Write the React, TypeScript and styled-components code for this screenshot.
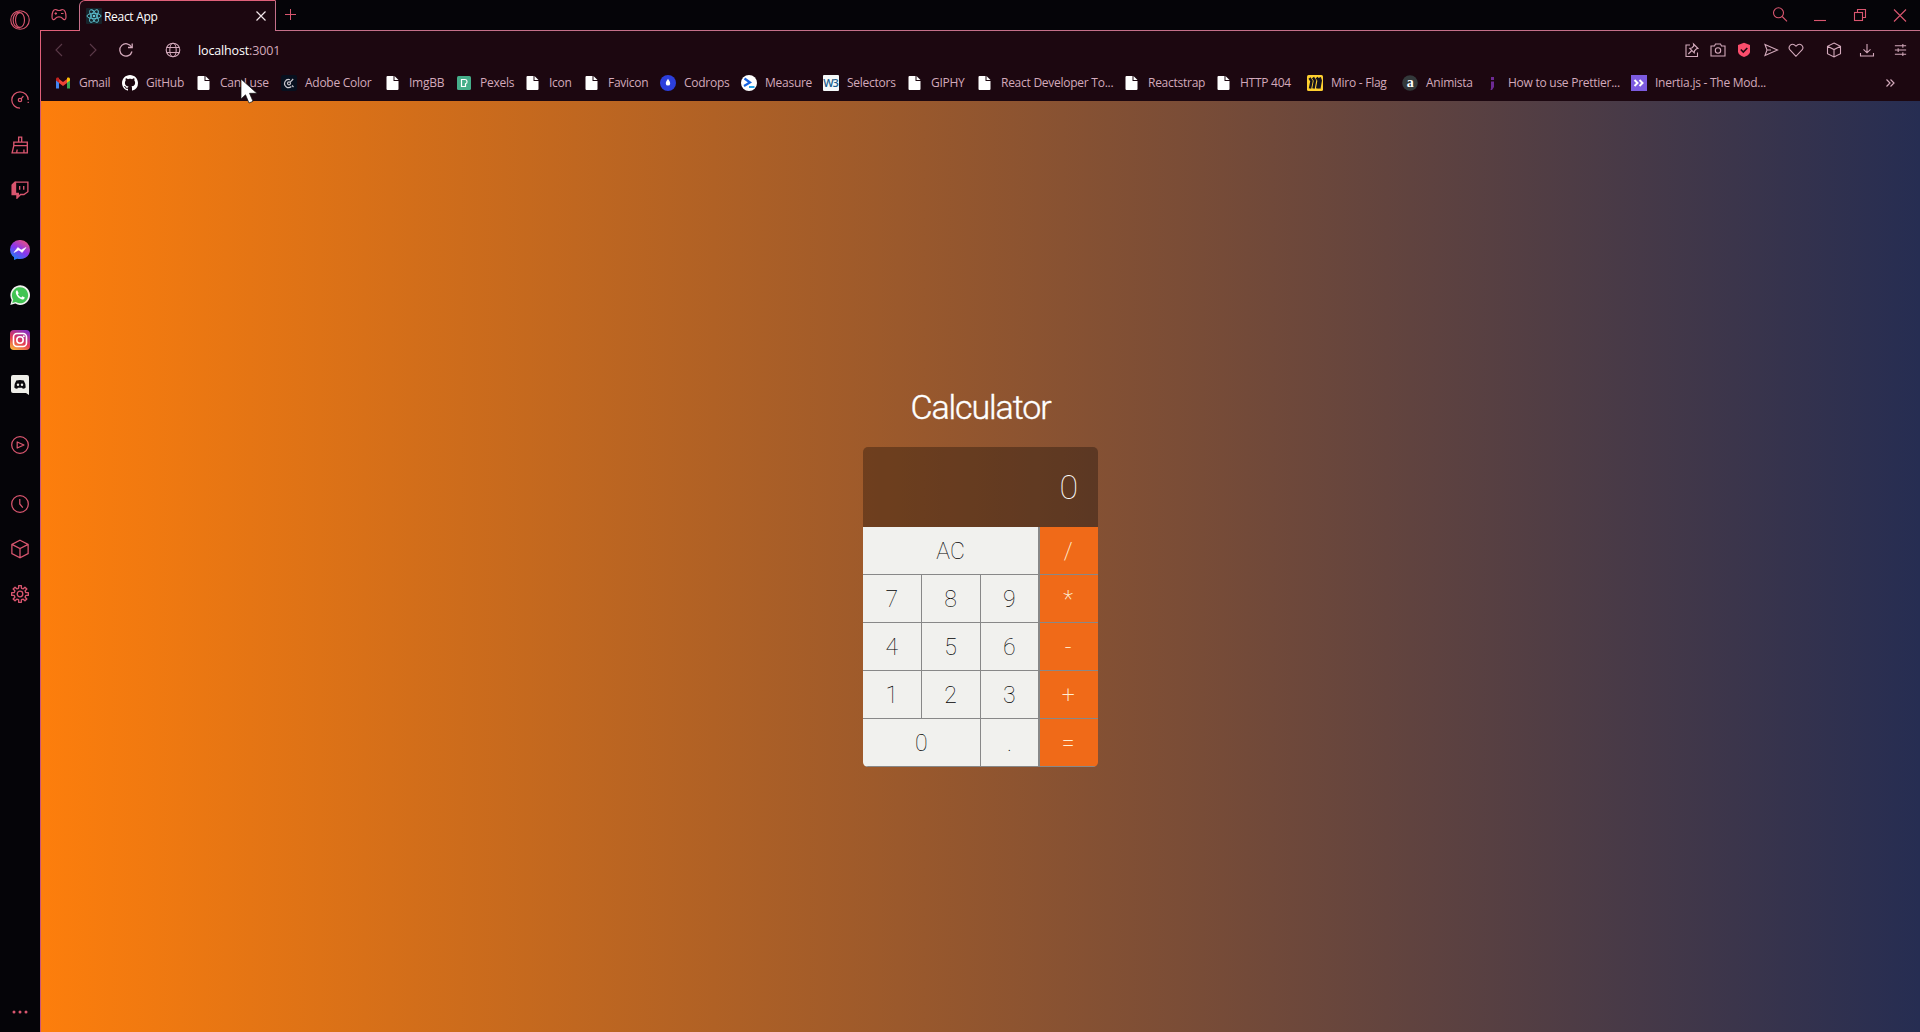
import React from 'react';
import styled, { createGlobalStyle } from 'styled-components';

const ui = `"Open Sans", "Noto Sans", sans-serif`;
const pink = '#d9566f';
const soft = '#d3a9bb';

const Global = createGlobalStyle`
  * { box-sizing: border-box; }
  html, body { margin: 0; padding: 0; overflow: hidden; background: #050408; }
  body { font-family: ${ui}; }
`;

const Window = styled.div`
  position: relative;
  display: flex;
  width: 1920px;
  height: 1032px;
  overflow: hidden;
`;
const Sidebar = styled.aside`
  width: 40px;
  flex: none;
  display: flex;
  flex-direction: column;
  align-items: center;
  background: #050408;
  color: ${pink};
`;
const SideSlot = styled.div<{ $h: number }>`
  height: ${p => p.$h}px;
  width: 40px;
  flex: none;
  display: flex;
  align-items: center;
  justify-content: center;
`;
const SideSpacer = styled.div<{ $h?: number }>`
  ${p => (p.$h ? `height: ${p.$h}px; flex: none;` : 'flex: 1;')}
`;
const Main = styled.div`
  width: 1880px;
  display: flex;
  flex-direction: column;
`;
const TabStrip = styled.div`
  height: 31px;
  flex: none;
  display: flex;
  background: #050408;
  color: ${pink};
`;
const StripLeft = styled.div`
  width: 39px;
  display: flex;
  align-items: center;
  justify-content: center;
  padding: 0 2px 0 0;
  border-bottom: 1px solid #e0607a;
`;
const Tab = styled.div`
  width: 197px;
  height: 31px;
  display: flex;
  align-items: center;
  padding: 0 9px 0 6px;
  background: #1c0710;
  border: 1px solid #e0607a;
  border-bottom: none;
  border-left-color: #c5708a;
  border-right-color: #c5708a;
  border-radius: 6px 1px 0 0;
`;
const TabTitle = styled.span`
  flex: 1;
  margin-left: 2px;
  font-size: 12px;
  letter-spacing: -0.3px;
  color: #fff;
`;
const StripRest = styled.div`
  flex: 1;
  display: flex;
  border-bottom: 1px solid #c5708a;
`;
const NewTab = styled.div`
  width: 29px;
  height: 29px;
  display: flex;
  align-items: center;
  justify-content: center;
`;
const WindowButtons = styled.div`
  margin-left: auto;
  margin-right: 12px;
  height: 29px;
  display: grid;
  grid-template-columns: repeat(3, 40px) 16px;
  align-items: center;
`;
const Chrome = styled.div`
  height: 70px;
  flex: none;
  display: flex;
  flex-direction: column;
  background: #1c0710;
  border-left: 1px solid #e0607a;
`;
const AddressRow = styled.div`
  height: 38px;
  display: flex;
  align-items: center;
  padding: 0 12px 0 11px;
  color: ${soft};
`;
const NavCell = styled.div<{ $w: number; $dim?: boolean }>`
  width: ${p => p.$w}px;
  height: 20px;
  display: flex;
  align-items: center;
  color: ${p => (p.$dim ? '#5b3948' : 'inherit')};
`;
const Url = styled.div`
  flex: 1;
  font-size: 12.5px;
  letter-spacing: -0.14px;
  color: ${soft};
  b { font-weight: 400; color: #fff; }
`;
const Tools = styled.div`
  display: flex;
  align-items: center;
`;
const Bookmarks = styled.div`
  height: 28px;
  display: flex;
  align-items: center;
  padding-left: 14px;
`;
const Bookmark = styled.div<{ $w: number }>`
  width: ${p => p.$w}px;
  flex: none;
  display: flex;
  align-items: center;
  gap: 8px;
  font-size: 12px;
  letter-spacing: -0.26px;
  line-height: 16px;
  white-space: nowrap;
  color: ${soft};
  svg { flex: none; }
`;
const More = styled.div`
  margin-left: auto;
  margin-right: 24px;
  display: flex;
  color: ${soft};
`;
const Page = styled.main`
  flex: 1;
  display: flex;
  flex-direction: column;
  align-items: center;
  border-left: 1px solid #c8577a;
  background: linear-gradient(to right, #fd7e0c, #262d52);
`;
const Title = styled.h1`
  margin: 285px 0 0;
  height: 42px;
  font: 300 34px/42px Roboto, sans-serif;
  letter-spacing: -1.100px;
  -webkit-text-stroke: 0.4px #fff;
  color: #fff;
`;
const Calculator = styled.section`
  width: 235px;
  height: 320px;
  margin-top: 19px;
  display: grid;
  grid-template-columns: repeat(4, 1fr);
  grid-template-rows: 80px repeat(5, 48px);
  border-radius: 5px;
  overflow: hidden;
  font-family: Roboto, sans-serif;
`;
const Display = styled.div`
  grid-column: span 4;
  display: flex;
  align-items: center;
  justify-content: flex-end;
  padding-right: 20px;
  font-size: 34px;
  font-weight: 100;
  color: #fff;
  background: rgba(0, 0, 0, 0.3);
`;
const Key = styled.button<{ $span?: number; $op?: boolean }>`
  grid-column: span ${p => p.$span || 1};
  margin: 0;
  padding: 1px ${p => (p.$op ? 2 : 0)}px 0 0;
  border: 0;
  border-right: ${p => (p.$op ? 0 : 1)}px solid #888;
  border-bottom: 1px solid #888;
  font: ${p => (p.$op ? 200 : 100)} 23px Roboto, sans-serif;
  color: ${p => (p.$op ? '#fff0d4' : '#000')};
  background: ${p => (p.$op ? '#f06a18' : '#f1f1ee')};
  ${p => p.$op && 'border-left: 1px solid #888;'}
`;
const Cursor = styled.svg`
  position: absolute;
  left: 240px;
  top: 78px;
`;

type IconProps = { d: React.ReactNode; s?: number; w?: number };
const Line = ({ d, s = 16, w = 1.1 }: IconProps) => (
  <svg width={s} height={s} viewBox="0 0 16 16" fill="none" stroke="currentColor" strokeWidth={w}>{d}</svg>
);

const cube = <path d="M8 1l6.500 3.300v7.400L8 15l-6.500-3.300V4.300zM1.500 4.300L8 7.600l6.500-3.300M8 7.600V15" />;

const Doc = () => (
  <svg width="16" height="16" viewBox="0 0 16 16">
    <path d="M2.500 1h6v5h5v8a1 1 0 0 1-1 1h-10a1 1 0 0 1-1-1V2a1 1 0 0 1 1-1z" fill="#fff" />
    <path d="M9.500 1l4 4h-4z" fill="#fff" />
  </svg>
);
const Gmail = () => (
  <svg width="16" height="16" viewBox="0 0 16 16">
    <path d="M1 13.500V4l3 2.300v7.200z" fill="#4285f4" />
    <path d="M12 13.500V6.300L15 4v9.500z" fill="#34a853" />
    <path d="M4 8V4l4 3 4-3v4l-4 3z" fill="#ea4335" />
    <path d="M1 4c0-1.500 1.600-2 2.700-1.200L4 3v4.800L1 5.500z" fill="#c5221f" />
    <path d="M15 4c0-1.500-1.600-2-2.700-1.200L12 3v4.800l3-2.300z" fill="#fbbc04" />
  </svg>
);
const GitHub = () => (
  <svg width="16" height="16" viewBox="0 0 16 16" fill="#fff">
    <path d="M8 0C3.580 0 0 3.580 0 8c0 3.540 2.290 6.530 5.470 7.590.4.070.55-.17.55-.38 0-.19-.01-.82-.01-1.490-2.010.37-2.530-.49-2.690-.94-.09-.23-.48-.94-.82-1.130-.28-.15-.68-.52-.01-.53.63-.01 1.080.58 1.230.82.72 1.210 1.870.87 2.330.66.07-.52.28-.87.51-1.070-1.780-.2-3.640-.89-3.640-3.950 0-.87.31-1.590.82-2.150-.08-.2-.36-1.020.08-2.120 0 0 .67-.21 2.200.82.64-.18 1.320-.27 2-.27s1.360.09 2 .27c1.530-1.040 2.200-.82 2.200-.82.44 1.100.16 1.920.08 2.120.51.56.82 1.270.82 2.150 0 3.070-1.870 3.750-3.650 3.950.29.25.54.73.54 1.480 0 1.070-.01 1.930-.01 2.200 0 .21.15.46.55.38A8.010 8.010 0 0 0 16 8c0-4.420-3.580-8-8-8z" />
  </svg>
);
const Adobe = () => (
  <svg width="16" height="16" viewBox="0 0 16 16" fill="none" stroke="#c8c4cc" strokeWidth="1.200">
    <rect width="16" height="16" rx="2" fill="#07101f" stroke="none" />
    <path d="M9 4.800A4 4 0 1 0 10.300 11.500" />
    <circle cx="8" cy="8.300" r="1.500" />
    <path d="M9.200 7.100l3-3.100M11 10.500l1.500 1.500" />
  </svg>
);
const Pexels = () => (
  <svg width="16" height="16" viewBox="0 0 16 16">
    <rect x="1" y="1" width="14" height="14" rx="1.500" fill="#45ae8a" />
    <path d="M5.500 4.500h3.300a2.200 2.200 0 0 1 .7 4.300v2.700h-4z" fill="none" stroke="#fff" strokeWidth="1.200" />
  </svg>
);
const Codrops = () => (
  <svg width="16" height="16" viewBox="0 0 16 16">
    <circle cx="8" cy="8" r="8" fill="#2c3fdc" />
    <path d="M8 3.800c1 1.700 2.200 2.900 2.200 4.600a2.200 2.200 0 0 1-4.400 0C5.800 6.700 7 5.500 8 3.800z" fill="#fff" />
  </svg>
);
const Measure = () => (
  <svg width="16" height="16" viewBox="0 0 16 16" fill="none">
    <circle cx="8" cy="8" r="8" fill="#fff" />
    <path d="M3.500 3.500L9 7.500 3 11" stroke="#1763e0" strokeWidth="2.200" />
    <path d="M8 12h5.500" stroke="#27a4e8" strokeWidth="2" />
  </svg>
);
const BadgeText = styled.text`
  font-family: "Open Sans", sans-serif;
  font-weight: 600;
  letter-spacing: -1.300px;
`;
const W3 = () => (
  <svg width="16" height="16" viewBox="0 0 16 16">
    <rect width="16" height="16" rx="1" fill="#f4f8fa" />
    <BadgeText x="0.300" y="12" fontSize="11" fill="#1b5d8c">W3</BadgeText>
  </svg>
);
const Miro = () => (
  <svg width="16" height="16" viewBox="0 0 16 16" fill="none" stroke="#14121f" strokeWidth="2.500">
    <rect width="16" height="16" rx="1.500" fill="#ffd02f" stroke="none" />
    <path d="M2.500 3L4.500 6l-1.500 7.500M6 2.500L8 5.500l-1.500 8M9.700 2.500l2 3-1.500 8M12.700 2.500l1 3-1.400 8" />
  </svg>
);
const Animista = () => (
  <svg width="16" height="16" viewBox="0 0 16 16">
    <circle cx="8" cy="8" r="7.800" fill="#33393b" />
    <text x="8" y="12" textAnchor="middle" fontFamily="Liberation Serif, serif" fontWeight="700" fontSize="14" fill="#fff">a</text>
  </svg>
);
const Prettier = () => (
  <svg width="16" height="16" viewBox="0 0 16 16" fill="#6d2a94">
    <rect x="7" y="2" width="3" height="3" /><path d="M7 6.500h3V12l-2 3H6.500L7 13z" />
  </svg>
);
const Inertia = () => (
  <svg width="16" height="16" viewBox="0 0 16 16" fill="none" stroke="#fff" strokeWidth="2">
    <rect width="16" height="16" fill="#7c5be0" stroke="none" />
    <path d="M3.500 5l3 3-3 3M8.500 5l3 3-3 3" />
  </svg>
);

const bookmarks: [string, number, React.FC][] = [
  ['Gmail', 67, Gmail], ['GitHub', 74, GitHub], ['Can I use', 85, Doc], ['Adobe Color', 104, Adobe],
  ['ImgBB', 71, Doc], ['Pexels', 69, Pexels], ['Icon', 59, Doc], ['Favicon', 76, Doc],
  ['Codrops', 81, Codrops], ['Measure', 82, Measure], ['Selectors', 84, W3], ['GIPHY', 70, Doc],
  ['React Developer To...', 147, Doc], ['Reactstrap', 92, Doc], ['HTTP 404', 91, Doc],
  ['Miro - Flag', 95, Miro], ['Animista', 82, Animista], ['How to use Prettier...', 147, Prettier],
  ['Inertia.js - The Mod...', 140, Inertia],
];

const ReactLogo = () => (
  <svg width="16" height="16" viewBox="0 0 16 16" fill="none" stroke="#5fc6d6" strokeWidth="0.900">
    <rect width="16" height="16" rx="1" fill="#16242b" stroke="none" />
    <ellipse cx="8" cy="8" rx="7" ry="2.700" />
    <ellipse cx="8" cy="8" rx="7" ry="2.700" transform="rotate(60 8 8)" />
    <ellipse cx="8" cy="8" rx="7" ry="2.700" transform="rotate(120 8 8)" />
    <circle cx="8" cy="8" r="1.300" fill="#5fc6d6" stroke="none" />
  </svg>
);

const Messenger = () => (
  <svg width="20" height="20" viewBox="0 0 20 20">
    <defs>
      <linearGradient id="msg" x1="0.200" y1="1" x2="0.800" y2="0">
        <stop offset="0" stopColor="#1686f5" /><stop offset="0.500" stopColor="#8a35ee" /><stop offset="1" stopColor="#f0527c" />
      </linearGradient>
    </defs>
    <path d="M10 0a9.700 9.700 0 0 1 10 9.700c0 5.600-4.500 9.400-10 9.400-1 0-2-.1-2.800-.4L4 20v-2.700A9.600 9.600 0 0 1 0 9.700 9.700 9.700 0 0 1 10 0z" fill="url(#msg)" />
    <path d="M4 12.500l3.800-5 3.400 2.500L16 7.500l-3.800 5L8.800 10z" fill="#fff" stroke="#fff" strokeWidth="0.600" />
  </svg>
);
const WhatsApp = () => (
  <svg width="20" height="20" viewBox="0 0 20 20">
    <path d="M0.300 20l1.400-5A9.800 9.800 0 1 1 5.300 18.600z" fill="#f2f2ee" />
    <path d="M2.200 18.100l1-3.500a8.100 8.100 0 1 1 2.500 2.500z" fill="#41c452" />
    <path d="M7.200 5.300c-.9.300-1.700 1.300-1.300 3 .6 2.800 3.300 5.600 6.200 6.100 1.300.2 2.500-.6 2.700-2l-2.400-1.200-1.100 1.300c-1.500-.6-2.700-1.700-3.500-3.200l.9-1.100z" fill="#fff" />
  </svg>
);
const Instagram = () => (
  <svg width="20" height="20" viewBox="0 0 20 20" fill="none" stroke="#fff" strokeWidth="1.600">
    <defs>
      <linearGradient id="ig" x1="0.200" y1="1" x2="0.700" y2="0">
        <stop offset="0" stopColor="#f9b23c" /><stop offset="0.450" stopColor="#e53a54" /><stop offset="1" stopColor="#8b2fc0" />
      </linearGradient>
    </defs>
    <rect width="20" height="20" rx="4" fill="url(#ig)" stroke="none" />
    <rect x="3.500" y="3.500" width="13" height="13" rx="3.500" />
    <circle cx="10" cy="10" r="3.200" />
    <circle cx="13.800" cy="6.200" r="1" fill="#fff" stroke="none" />
  </svg>
);
const Discord = () => (
  <svg width="20" height="20" viewBox="0 0 20 20">
    <path d="M3 0h14a2 2 0 0 1 2 2v18l-3-2H3a2 2 0 0 1-2-2V2a2 2 0 0 1 2-2z" fill="#eeeee8" />
    <path d="M6.300 5.500Q10 4.300 13.700 5.500 15.700 8.500 15.700 12.500 14.500 13.700 12.800 13.700l-.7-1H7.900l-.7 1Q5.500 13.700 4.300 12.500 4.300 8.500 6.300 5.500z" fill="#0a0a0c" />
    <circle cx="8" cy="9.800" r="1.200" fill="#eeeee8" /><circle cx="12" cy="9.800" r="1.200" fill="#eeeee8" />
  </svg>
);

const keys: [string, number, boolean][] = [
  ['AC', 3, false], ['/', 1, true],
  ['7', 1, false], ['8', 1, false], ['9', 1, false], ['*', 1, true],
  ['4', 1, false], ['5', 1, false], ['6', 1, false], ['-', 1, true],
  ['1', 1, false], ['2', 1, false], ['3', 1, false], ['+', 1, true],
  ['0', 2, false], ['.', 1, false], ['=', 1, true],
];

const gear = Array.from({ length: 8 }, (_, i) => {
  const pts = [[-22, 5.2], [-13, 5.4], [-9, 7.5], [9, 7.5], [13, 5.4]];
  return pts.map(([a, r]) => {
    const t = ((i * 45 + a) * Math.PI) / 180;
    return `${(8 + r * Math.sin(t)).toFixed(2)},${(8 - r * Math.cos(t)).toFixed(2)}`;
  }).join(' ');
}).join(' ');

export default function App() {
  return (
    <Window>
      <Global />
      <Sidebar>
        <SideSlot $h={40}>
          <Line s={20} w={0.9} d={<><circle cx="8" cy="8" r="7.400" /><ellipse cx="8" cy="8" rx="3.600" ry="5.900" /><path d="M8 1.700C4 1.500 2.500 5 2.500 8s1.500 6.300 5.500 6.300" /></>} />
        </SideSlot>
        <SideSpacer $h={37} />
        <SideSlot $h={45}><Line s={18} d={<><path d="M8 15.300A7.300 7.300 0 1 1 15.300 8M8.800 7.200l2.200-2.700" /><circle cx="8" cy="8" r="1.500" /><path d="M15.300 9.500v1.200" /></>} /></SideSlot>
        <SideSlot $h={45}><Line s={18} w={1.2} d={<path d="M6.800 5.500V1h2.700v4.500M2.500 8.500V5.500h12v3zM2.500 8.500L1 15h13.500V8.500M5 15l.5-3M11.500 15v-3" />} /></SideSlot>
        <SideSlot $h={46}><Line s={18} w={1.2} d={<><path d="M3.500 1H15v8.500L11.500 12H8.500L5.500 15v-3H1V3.500z" /><path d="M1.500 3.500v8h4v2.800L6.500 13v-2H4V1.500z" fill="currentColor" /><path d="M7.700 4.500v3.300M11.300 4.500v3.300" /></>} /></SideSlot>
        <SideSpacer $h={14} />
        <SideSlot $h={45}><Messenger /></SideSlot>
        <SideSlot $h={45}><WhatsApp /></SideSlot>
        <SideSlot $h={45}><Instagram /></SideSlot>
        <SideSlot $h={45}><Discord /></SideSlot>
        <SideSpacer $h={15} />
        <SideSlot $h={45}><Line s={18} d={<><circle cx="8" cy="8" r="7.400" /><path d="M5.500 5.300L11.500 8l-6 2.700z" strokeLinejoin="round" /></>} /></SideSlot>
        <SideSpacer $h={15} />
        <SideSlot $h={44}><Line s={18} d={<><circle cx="8" cy="8" r="7.400" /><path d="M7.800 3.500V8l2.700 3.200" /></>} /></SideSlot>
        <SideSlot $h={45}><Line s={20} w={1} d={cube} /></SideSlot>
        <SideSlot $h={46}><Line s={18} w={1.2} d={<><polygon points={gear} strokeLinejoin="round" /><circle cx="8" cy="8" r="2.500" /></>} /></SideSlot>
        <SideSpacer />
        <SideSlot $h={40}>
          <svg width="16" height="4" viewBox="0 0 16 4" fill={pink}><circle cx="2" cy="2" r="1.500" /><circle cx="8" cy="2" r="1.500" /><circle cx="14" cy="2" r="1.500" /></svg>
        </SideSlot>
      </Sidebar>
      <Main>
        <TabStrip>
          <StripLeft>
            <svg width="16" height="14" viewBox="0 0 16 14" fill="none" stroke="currentColor" strokeWidth="1.200">
              <path d="M4.500 1.500C2 1.500 1 5 1 9c0 3 2 3.500 3.500 1.300C5.500 9 6 8.800 8 8.800s2.500.2 3.500 1.500C13 12.500 15 12 15 9c0-4-1-7.500-3.500-7.500C10.500 1.500 10 2.500 8 2.500s-2.500-1-3.500-1z" />
              <path d="M3.500 5.500h2.500M4.800 4.300v2.500M10 5.500h2.500" />
            </svg>
          </StripLeft>
          <Tab>
            <ReactLogo />
            <TabTitle>React App</TabTitle>
            <svg width="10" height="10" viewBox="0 0 10 10" stroke="#f3e6ea" strokeWidth="1.200"><path d="M.5.5l9 9M9.500.5l-9 9" /></svg>
          </Tab>
          <StripRest>
            <NewTab><svg width="11" height="11" viewBox="0 0 11 11" stroke="currentColor"><path d="M5.500 0v11M0 5.500h11" /></svg></NewTab>
            <WindowButtons>
              <Line d={<><circle cx="6.500" cy="5.800" r="5" /><path d="M10.200 9.500l4.800 4.800" /></>} />
              <Line d={<path d="M2 13.500h12" />} />
              <Line d={<><rect x="2.500" y="5.500" width="8" height="8" /><path d="M5.500 5.500V2.500h8v8h-3" /></>} />
              <Line d={<path d="M2 2.500l12 12M14 2.500l-12 12" />} />
            </WindowButtons>
          </StripRest>
        </TabStrip>
        <Chrome>
          <AddressRow>
            <NavCell $w={33} $dim><Line d={<path d="M10 2L4 8l6 6" />} /></NavCell>
            <NavCell $w={33} $dim><Line d={<path d="M5 2l6 6-6 6" />} /></NavCell>
            <NavCell $w={47}><Line w={1.3} d={<><path d="M13.500 5A6.200 6.200 0 1 0 14 9.500" /><path d="M14.200 1.500V5.500H10" /></>} /></NavCell>
            <NavCell $w={33}><Line d={<><circle cx="8" cy="8" r="6.800" /><ellipse cx="8" cy="8" rx="3.200" ry="6.800" /><path d="M1.800 5.500h12.400M1.800 10.500h12.400" /></>} /></NavCell>
            <Url><b>localhost</b>:3001</Url>
            <Tools>
              <NavCell $w={26}><Line d={<><path d="M6 3H2v11.500h11.500v-4" /><path d="M9.500 2l4.500 4.500-1.500.3-2 2-.3 2L5.800 6.300l2-.3 2-2zM7.800 8.500l-3.500 3.500" /></>} /></NavCell>
              <NavCell $w={26}><Line d={<><path d="M1 4h3.500l1-2h5l1 2H15v10H1z" /><circle cx="8" cy="8.500" r="2.700" /></>} /></NavCell>
              <NavCell $w={27}>
                <svg width="16" height="16" viewBox="0 0 16 16"><path d="M8 .8l6 2.300v6.400c0 2.500-2.500 4.500-6 5.500-3.500-1-6-3-6-5.500V3.100z" fill="#fb4d6c" /><path d="M4.800 7.500L7.300 10l4-4" fill="none" stroke="#1c0710" strokeWidth="1.600" /></svg>
              </NavCell>
              <NavCell $w={25}><Line d={<path d="M2 2.500L14.500 8 2 13.500 4 8zM4 8h4" />} /></NavCell>
              <NavCell $w={38}><Line d={<path d="M8 14.300L2 8C-.5 5 3.500-.5 8 4.200 12.500-.5 16.500 5 14 8z" />} /></NavCell>
              <NavCell $w={33}><Line d={cube} /></NavCell>
              <NavCell $w={34}><Line d={<path d="M8 2v8.500M4.500 7.300L8 10.800l3.500-3.500M1.500 11v3h13v-3" />} /></NavCell>
              <NavCell $w={15}><Line d={<path d="M2 3.500h12M2 8h12M2 12.500h12M10.500 1.500v4M5.500 6v4M10.500 10.500v4" />} /></NavCell>
            </Tools>
          </AddressRow>
          <Bookmarks>
            {bookmarks.map(([label, w, Icon]) => (
              <Bookmark key={label} $w={w}><Icon />{label}</Bookmark>
            ))}
            <More><svg width="11" height="10" viewBox="0 0 11 10" fill="none" stroke="currentColor" strokeWidth="1.200"><path d="M1.500 1.500L5 5 1.500 8.500M5.500 1.500L9 5 5.500 8.500" /></svg></More>
          </Bookmarks>
        </Chrome>
        <Page>
          <Title>Calculator</Title>
          <Calculator>
            <Display>0</Display>
            {keys.map(([label, span, op]) => (
              <Key key={label} $span={span} $op={op}>{label}</Key>
            ))}
          </Calculator>
        </Page>
      </Main>
      <Cursor width="19" height="27" viewBox="0 0 19 27">
        <path d="M1 1v20l4.500-4.200L9 25l4-1.700-3.500-8H17z" fill="#fff" stroke="#111" strokeWidth="0.700" />
      </Cursor>
    </Window>
  );
}
